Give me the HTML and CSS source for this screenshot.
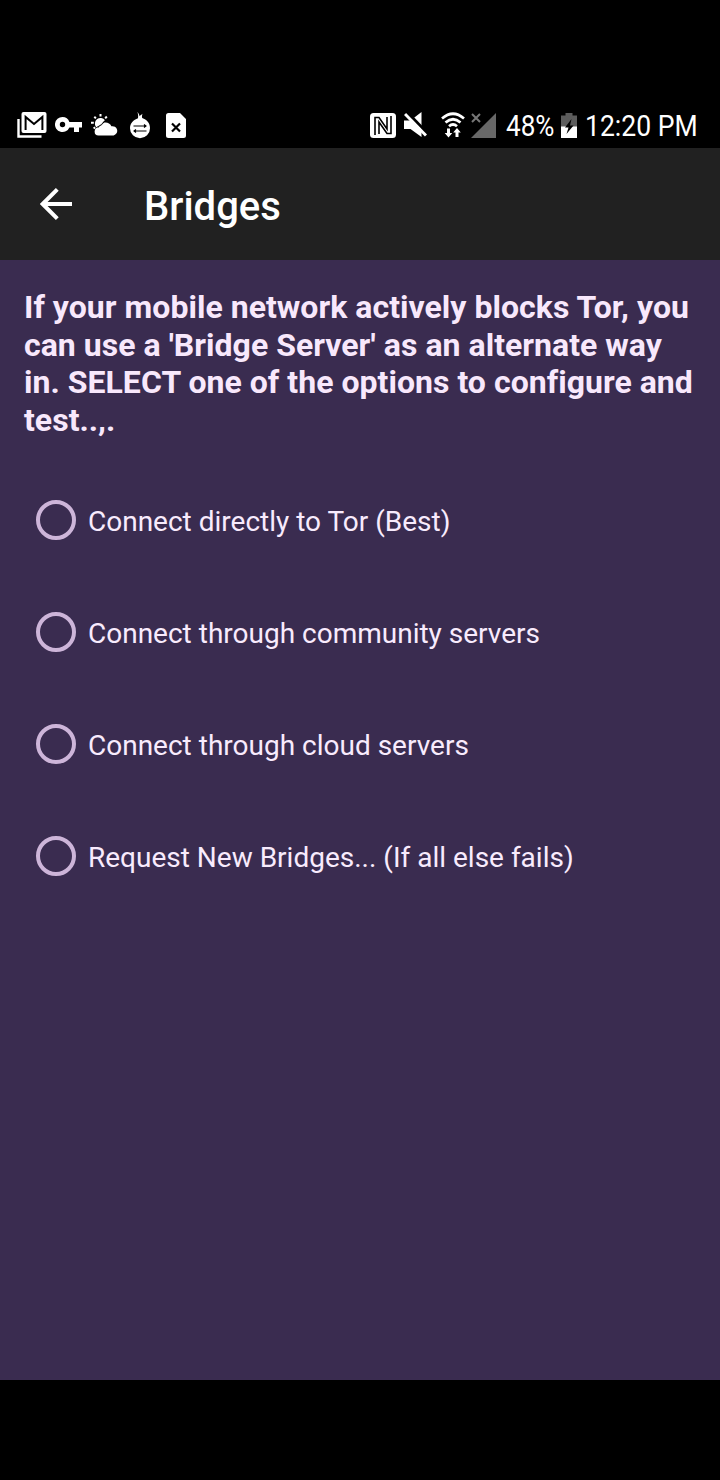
FILE: index.html
```html
<!DOCTYPE html>
<html lang="en">
<head>
    <meta charset="UTF-8">
    <meta name="viewport" content="width=device-width, initial-scale=1.0">
    <title>Bridges</title>
    <link rel="stylesheet" href="styles.css">
</head>
<body>

<div class="phone">
    <div class="status-bar">
        <div class="notifications">
            <!-- mail -->
            <svg width="30" height="26" viewBox="0 0 30 26">
                <path d="M1.500 7v17.500h23" fill="none" stroke="#fff" stroke-width="2.400"/>
                <rect x="4.500" y="0" width="25" height="21" rx="2" fill="#fff"/>
                <path d="M8.600 18V5l8.400 7 8.400-7v13" fill="none" stroke="#000" stroke-width="2"/>
            </svg>
            <!-- vpn key -->
            <svg width="27" height="16" viewBox="0 0 27 16">
                <path fill="#fff" fill-rule="evenodd" d="M7.500 0a7.500 7.500 0 1 0 6.900 10.400H19V15h5v-4.600h3V5H14.400A7.500 7.500 0 0 0 7.500 0zm0 4.800a2.700 2.700 0 1 1 0 5.400 2.700 2.700 0 0 1 0-5.400z"/>
            </svg>
            <!-- weather -->
            <svg width="27" height="22" viewBox="0 0 27 22">
                <path d="M9.500 0v2.600M3.300 2.800l1.600 1.600M0 8.800h2.800M2.600 14.500l1.600-1.300M15.800 2.500l-1.600 1.800" stroke="#fff" stroke-width="2"/>
                <path d="M5 13A5.600 5.600 0 0 1 14 6.200L6.400 14z" fill="#fff"/>
                <path d="M7.500 21.500a4 4 0 0 1 .3-8 6.800 6.800 0 0 1 12.600-1.200 4.700 4.700 0 0 1 2.200 9.200z" fill="#fff"/>
                <path d="M14 6.500Q12 11 5.500 13.500" fill="none" stroke="#000" stroke-width="1"/>
            </svg>
            <!-- onion -->
            <svg width="20" height="27" viewBox="0 0 20 27">
                <path d="M7.400 0c1.300 1.500 2 2.800 2.200 4.200.9-.9 1.500-1.500 3-2.400-.7 1.500-.8 3-.4 4.300 4.500 1.400 7.800 5 7.800 10.200a10 10 0 0 1-20 0C0 11.300 3.500 7.700 8 6.200 8.400 4 8.100 2 7.400 0z" fill="#fff"/>
                <path d="M3.500 14h12.500M14 12.500l2 1.500-2 1.500M16.500 19H4M6 17.500l-2 1.500 2 1.500" fill="none" stroke="#000" stroke-width="1.100"/>
            </svg>
            <!-- file error -->
            <svg width="20" height="25" viewBox="0 0 20 25">
                <path d="M2.500 0H14l6 6v16.500a2.500 2.500 0 0 1-2.500 2.500h-15A2.500 2.500 0 0 1 0 22.500v-20A2.500 2.500 0 0 1 2.500 0z" fill="#fff"/>
                <path d="m6 10.500 8 8m0-8-8 8" stroke="#000" stroke-width="2.200"/>
            </svg>
        </div>

        <div class="system">
            <!-- nfc -->
            <svg width="26" height="25" viewBox="0 0 26 25">
                <rect width="26" height="25" rx="3.500" fill="#fff"/>
                <path d="M5 22V4.500h4L17 16V4M21 3v17.500h-4L9 9v12" fill="none" stroke="#000" stroke-width="1.600"/>
            </svg>
            <!-- muted -->
            <svg class="mute" width="23" height="26" viewBox="0 0 23 26">
                <path d="M0 8.500h6.500L17.500 0v25L6.500 17H0z" fill="#fff"/>
                <path d="M3 0 23 21" stroke="#000" stroke-width="3"/>
                <path d="M1 2 22 23.500" stroke="#fff" stroke-width="3"/>
            </svg>
            <!-- wifi -->
            <svg class="wifi" width="24" height="26" viewBox="0 0 24 26">
                <path d="M1 6.500Q12-3 23 6.500M4.500 10.500Q12 4 19.500 10.500M8 14.200Q12 10.800 16 14.200" fill="none" stroke="#fff" stroke-width="2.700"/>
                <path d="M6 16.500h3V21h2.300l-3.800 4.500L3.700 21H6zM14.500 25h3v-4.500h2.300L16 16l-3.800 4.500h2.300z" fill="#fff"/>
            </svg>
            <!-- no signal -->
            <svg class="signal" width="25" height="25" viewBox="0 0 25 25">
                <path d="M25 0v25H0z" fill="#686868"/>
                <path d="m1 1 8 8m0-8-8 8" stroke="#777" stroke-width="2"/>
            </svg>
            <span class="percent">48%</span>
            <!-- charging -->
            <svg class="battery" width="16" height="25" viewBox="0 0 16 25">
                <path d="M0 2.500h4.500V0h7v2.500H16V25H0z" fill="#5c5c5c"/>
                <path d="M0 13.500h16V25H0z" fill="#fff"/>
                <path d="M10.500 6 4 14.500h3.500L5.500 21l7-8.500H9z" fill="#000"/>
            </svg>
            <span class="time">12:20 PM</span>
        </div>
    </div>

    <header>
        <button class="back-btn" aria-label="Back">
            <svg width="32" height="32" viewBox="0 0 32 32">
                <path d="M32 16H3M17.300 1.400 2.700 16l14.600 14.600" fill="none" stroke="#fff" stroke-width="4"/>
            </svg>
        </button>
        <h2>Bridges</h2>
    </header>

    <main>
        <p class="intro">If your mobile network actively blocks Tor, you<br>can use a 'Bridge Server' as an alternate way<br>in. SELECT one of the options to configure and<br>test..,.</p>

        <div class="options">
            <label class="option"><input type="radio" name="bridge"><span>Connect directly to Tor (Best)</span></label>
            <label class="option"><input type="radio" name="bridge"><span>Connect through community servers</span></label>
            <label class="option"><input type="radio" name="bridge"><span>Connect through cloud servers</span></label>
            <label class="option"><input type="radio" name="bridge"><span>Request New Bridges... (If all else fails)</span></label>
        </div>
    </main>
</div>

</body>
</html>
```
FILE: styles.css
```css
* {
    box-sizing: border-box;
}

body {
    font-family: Roboto, sans-serif;
    background: #000;
    color: white;
    margin: 0;
}

.phone {
    display: flex;
    flex-direction: column;
    width: 720px;
    height: 1480px;
    padding: 100px 0;
}

.status-bar {
    display: flex;
    justify-content: space-between;
    height: 48px;
    padding: 2px 23px 0 17px;
}

.status-bar svg {
    display: block;
    flex: none;
}

.notifications {
    display: flex;
    align-items: center;
    gap: 8px;
}

.notifications svg:nth-child(3) {
    margin-left: 1px;
}

.notifications svg:nth-child(4) {
    margin-left: 4px;
}

.notifications svg:nth-child(5) {
    margin-left: 8px;
}

.system {
    display: flex;
    align-items: center;
}

.mute {
    margin-left: 8px;
}

.wifi {
    margin-left: 14px;
}

.signal {
    margin-left: 6px;
}

.percent,
.time {
    font-size: 30px;
    line-height: 36px;
    padding-top: 1px;
    white-space: nowrap;
    transform: scaleX(0.87);
    transform-origin: left;
}

.percent {
    width: 54px;
    margin-left: 10px;
}

.battery {
    margin-left: 1px;
}

.time {
    width: 112px;
    margin-left: 8px;
    transform: scaleX(0.885);
}

header {
    display: flex;
    align-items: center;
    height: 112px;
    padding-left: 40px;
    background: #212121;
}

.back-btn {
    width: 32px;
    height: 32px;
    padding: 0;
    background: none;
    border: none;
    cursor: pointer;
}

.back-btn svg {
    display: block;
}

header h2 {
    margin: 4px 0 0 72px;
    font-size: 40px;
    font-weight: 500;
}

main {
    flex: 1;
    padding: 29px 0 0 24px;
    background: #3a2c50;
}

.intro {
    margin: 0;
    color: #f8e8fc;
    font-size: 32px;
    font-weight: 700;
    line-height: 37.5px;
    letter-spacing: 0.03px;
    white-space: nowrap;
    font-variant-ligatures: common-ligatures;
}

.options {
    margin-top: 25px;
}

.option {
    display: flex;
    align-items: center;
    gap: 12px;
    height: 112px;
    padding-left: 12px;
    color: #f8ebfd;
    font-size: 28px;
    cursor: pointer;
}

.option input {
    appearance: none;
    width: 40px;
    height: 40px;
    margin: 0;
    border: 4px solid #cdb5d9;
    border-radius: 50%;
}

.option span {
    padding-top: 2px;
}
```
